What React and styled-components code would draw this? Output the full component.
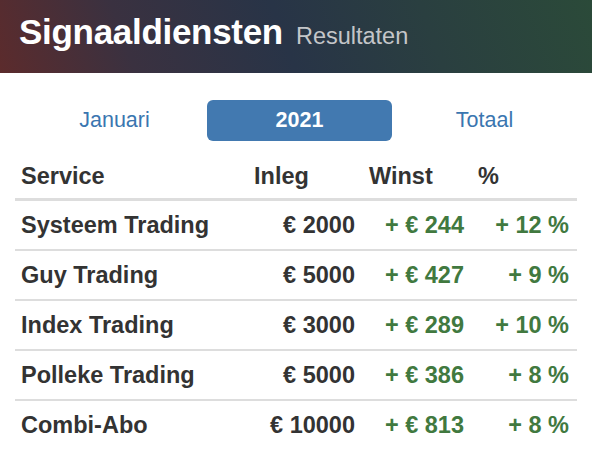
import React, { useState } from "react";
import styled, { createGlobalStyle } from "styled-components";

const GlobalStyle = createGlobalStyle`
  body {
    margin: 0;
    background: #fff;
    font-family: "Liberation Sans", Arial, sans-serif;
    color: #333;
  }
`;

const Page = styled.div`
  width: 592px;
  height: 466px;
  overflow: hidden;
`;

const Header = styled.header`
  height: 73px;
  display: flex;
  align-items: baseline;
  gap: 13px;
  padding: 12px 0 0 19px;
  box-sizing: border-box;
  background: linear-gradient(70deg, #5c2b2c 0%, #3a3140 22%, #283447 48%, #2a3f40 72%, #2b4a39 100%);
`;

const Title = styled.h1`
  margin: 0;
  font-size: 35px;
  font-weight: 700;
  color: #fff;
  letter-spacing: -0.3px;
`;

const Subtitle = styled.span`
  font-size: 23.5px;
  color: #c4c6c9;
`;

const Body = styled.div`
  padding: 27px 15px 0 15px;
`;

const Tabs = styled.nav`
  display: grid;
  grid-template-columns: repeat(3, 1fr);
  padding: 0 0 0 7px;
`;

const Tab = styled.button`
  height: 41px;
  border: none;
  border-radius: 6px;
  font-family: inherit;
  font-size: 21.5px;
  font-weight: ${(p) => (p.$active ? 700 : 400)};
  color: ${(p) => (p.$active ? "#fff" : "#3a76b0")};
  background: ${(p) => (p.$active ? "#4279b0" : "transparent")};
  cursor: pointer;
`;

const Table = styled.div`
  margin-top: 13px;
`;

const Row = styled.div`
  display: grid;
  grid-template-columns: 233px 115px 109px 105px;
  align-items: center;
  height: ${(p) => (p.$head ? "44px" : "48px")};
  border-bottom: ${(p) => (p.$head ? "3px solid #ddd" : p.$last ? "none" : "2px solid #ddd")};
  font-size: 23.5px;
  font-weight: 700;
`;

const Cell = styled.div`
  padding: 0 8px 0 6px;
  text-align: ${(p) => (p.$right ? "right" : "left")};
  color: ${(p) => (p.$green ? "#41793f" : "#333")};
  white-space: nowrap;
`;

const rows = [
  { name: "Systeem Trading", inleg: 2000, winst: 244, pct: 12 },
  { name: "Guy Trading", inleg: 5000, winst: 427, pct: 9 },
  { name: "Index Trading", inleg: 3000, winst: 289, pct: 10 },
  { name: "Polleke Trading", inleg: 5000, winst: 386, pct: 8 },
  { name: "Combi-Abo", inleg: 10000, winst: 813, pct: 8 },
];

const tabs = ["Januari", "2021", "Totaal"];

const App = () => {
  const [active, setActive] = useState("2021");

  return (
    <Page>
      <GlobalStyle />
      <Header>
        <Title>Signaaldiensten</Title>
        <Subtitle>Resultaten</Subtitle>
      </Header>
      <Body>
        <Tabs>
          {tabs.map((t) => (
            <Tab key={t} $active={t === active} onClick={() => setActive(t)}>
              {t}
            </Tab>
          ))}
        </Tabs>
        <Table>
          <Row $head>
            <Cell>Service</Cell>
            <Cell>Inleg</Cell>
            <Cell>Winst</Cell>
            <Cell>%</Cell>
          </Row>
          {rows.map((r, i) => (
            <Row key={r.name} $last={i === rows.length - 1}>
              <Cell>{r.name}</Cell>
              <Cell $right>€ {r.inleg}</Cell>
              <Cell $right $green>+ € {r.winst}</Cell>
              <Cell $right $green>+ {r.pct} %</Cell>
            </Row>
          ))}
        </Table>
      </Body>
    </Page>
  );
};

export default App;
